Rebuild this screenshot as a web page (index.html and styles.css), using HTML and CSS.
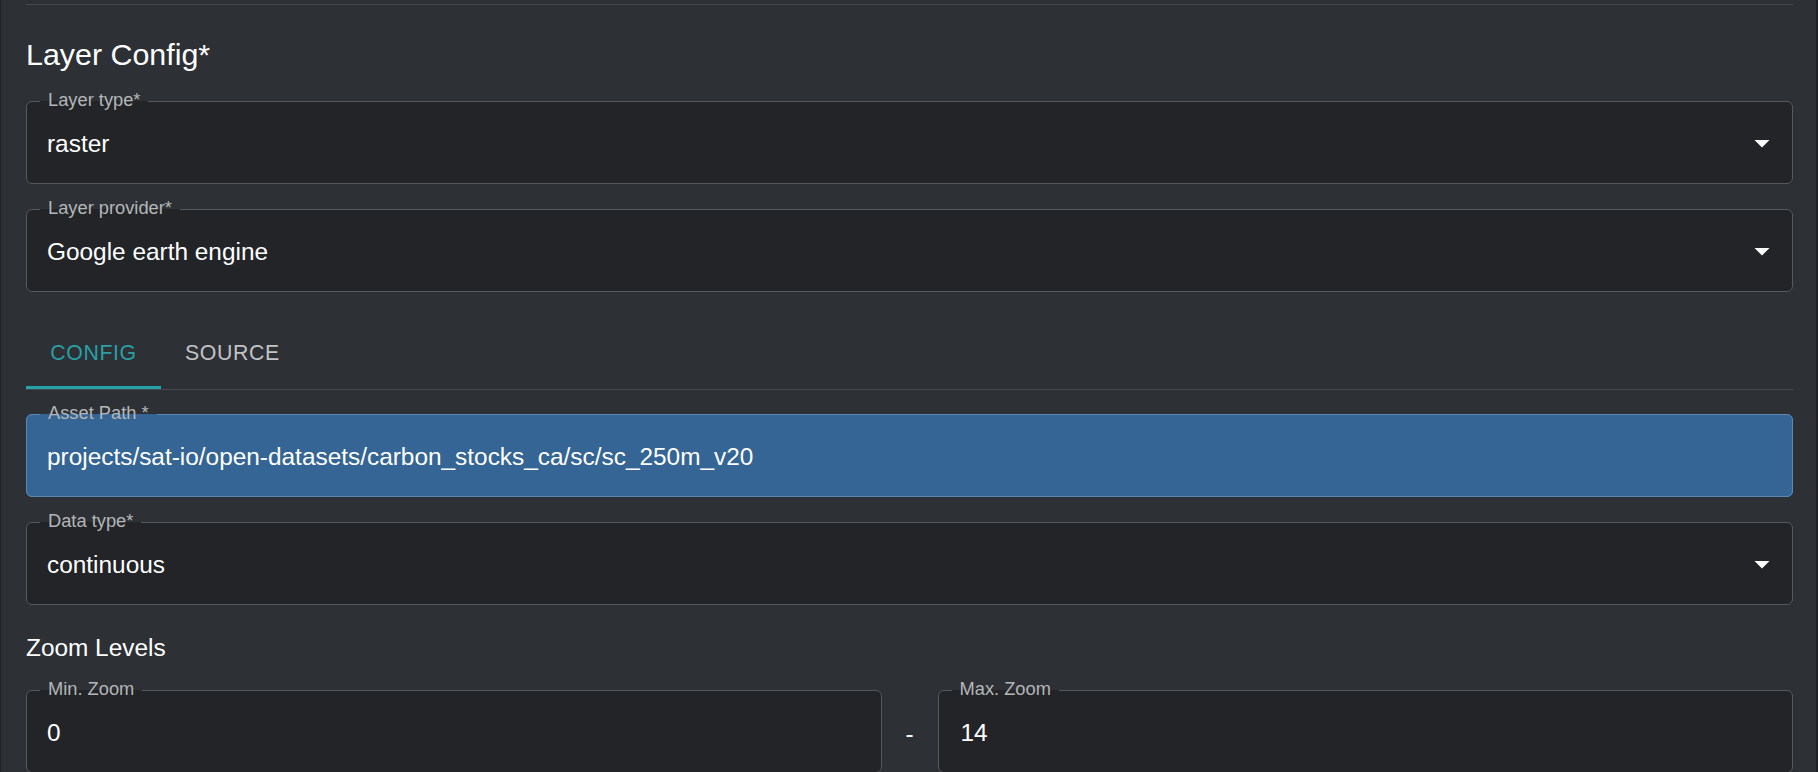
FILE: index.html
```html
<!DOCTYPE html>
<html lang="en">
<head>
<meta charset="utf-8">
<title>Layer Config</title>
<link rel="stylesheet" href="styles.css">
</head>
<body>
<div class="panel">
  <hr class="divider">
  <h2 class="title">Layer Config*</h2>

  <fieldset class="field">
    <legend><span class="label">Layer type*</span></legend>
    <div class="control">
      <span class="value">raster</span>
      <svg class="arrow" viewBox="0 0 24 24"><path d="M7 10l5 5 5-5z"/></svg>
    </div>
  </fieldset>

  <fieldset class="field field-gap">
    <legend><span class="label">Layer provider*</span></legend>
    <div class="control">
      <span class="value">Google earth engine</span>
      <svg class="arrow" viewBox="0 0 24 24"><path d="M7 10l5 5 5-5z"/></svg>
    </div>
  </fieldset>

  <div class="tabs">
    <div class="tab tab-active">Config<span class="indicator"></span></div>
    <div class="tab">Source</div>
  </div>

  <fieldset class="field field-filled field-after-tabs">
    <legend><span class="label">Asset Path *</span></legend>
    <div class="control">
      <span class="value">projects/sat-io/open-datasets/carbon_stocks_ca/sc/sc_250m_v20</span>
    </div>
  </fieldset>

  <fieldset class="field field-gap">
    <legend><span class="label">Data type*</span></legend>
    <div class="control">
      <span class="value">continuous</span>
      <svg class="arrow" viewBox="0 0 24 24"><path d="M7 10l5 5 5-5z"/></svg>
    </div>
  </fieldset>

  <h3 class="subtitle">Zoom Levels</h3>

  <div class="zoom-row">
    <fieldset class="field field-plain">
      <legend><span class="label">Min. Zoom</span></legend>
      <div class="control">
        <span class="value">0</span>
      </div>
    </fieldset>
    <div class="dash">-</div>
    <fieldset class="field field-plain">
      <legend><span class="label">Max. Zoom</span></legend>
      <div class="control control-max">
        <span class="value">14</span>
      </div>
    </fieldset>
  </div>
</div>
</body>
</html>
```

FILE: styles.css
```css
* {
  box-sizing: border-box;
}

html, body {
  margin: 0;
  padding: 0;
  background: #2d3035;
  height: 772px;
  overflow: hidden;
  font-family: "Liberation Sans", Arial, sans-serif;
  color: #ffffff;
}

.panel {
  min-height: 772px;
  border-left: 1px solid #1f2125;
  border-right: 2px solid #1f2125;
  padding: 4px 23px 0 25px;
}

.divider {
  margin: 0;
  height: 0;
  border: 0;
  border-top: 1px solid #46494e;
}

.title {
  margin: 31px 0 0;
  font-size: 30.4px;
  line-height: 36px;
  font-weight: 400;
  color: #ffffff;
}

.field {
  margin: 19px 0 0;
  padding: 0;
  min-width: 0;
  border: 1px solid #56595d;
  border-radius: 6px;
  background: #222428;
}

.field-gap {
  margin-top: 15px;
}

.field-after-tabs {
  margin-top: 14px;
}

.field-plain {
  margin: 0;
}

.field legend {
  margin-left: 13px;
  padding: 0 8px;
  font-size: 18.3px;
  line-height: 20px;
  color: #b4b6b8;
}

.label {
  position: relative;
  top: -1px;
}

.field-filled {
  background: #346594;
  border-color: #5e89b3;
}

.control {
  height: 72px;
  padding: 0 12px 6px 20px;
  display: flex;
  align-items: center;
  justify-content: space-between;
}

.control-max {
  padding-left: 22px;
}

.value {
  font-size: 24.4px;
  line-height: 28px;
  color: #ffffff;
  white-space: nowrap;
}

.arrow {
  width: 36px;
  height: 36px;
  flex: none;
  margin-top: -2px;
  fill: #ffffff;
}

.tabs {
  margin-top: 25px;
  display: flex;
  border-bottom: 1px solid #46484c;
}

.tab {
  position: relative;
  height: 72px;
  min-width: 135px;
  padding: 0 24px;
  display: flex;
  align-items: center;
  justify-content: center;
  font-size: 21.3px;
  letter-spacing: 0.6px;
  text-transform: uppercase;
  color: #c2c3c5;
}

.tab-active {
  color: #2a9fa4;
}

.indicator {
  position: absolute;
  left: 0;
  right: 0;
  bottom: 0;
  height: 3px;
  background: #26a3a8;
}

.subtitle {
  margin: 29px 0 0;
  font-size: 24.4px;
  line-height: 28px;
  font-weight: 400;
  color: #ffffff;
}

.zoom-row {
  margin-top: 18px;
  display: grid;
  grid-template-columns: 1fr 56px 1fr;
  align-items: stretch;
}

.dash {
  display: flex;
  align-items: center;
  justify-content: center;
  padding-top: 14px;
  font-size: 24.4px;
  line-height: 28px;
  color: #ffffff;
}
```
